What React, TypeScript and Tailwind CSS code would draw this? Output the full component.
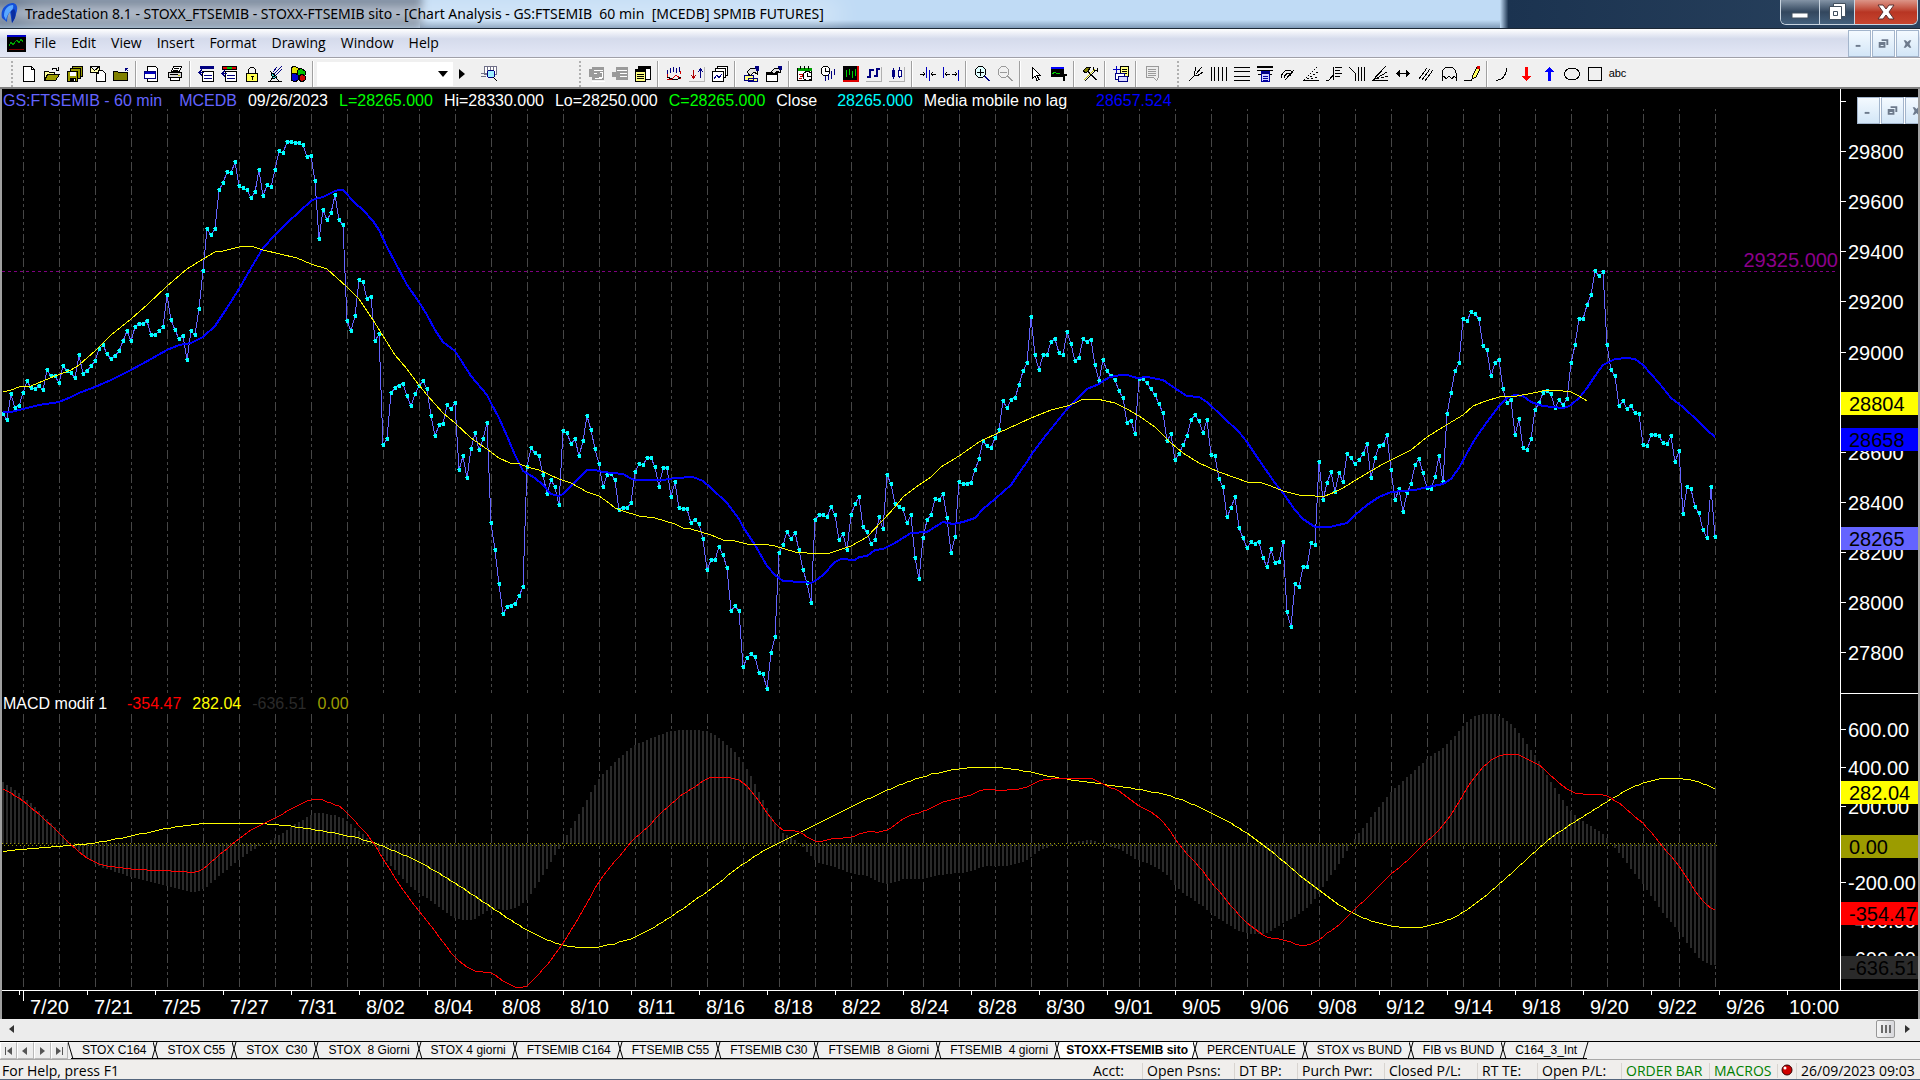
import { useState } from 'react'

type Point = [number, number]
type Shape = [d: string, fill: string, stroke?: string]

const FIRST_BAR_X = 3
const BAR_STEP = 4
const ZERO_Y = 844

// 60 minute closes, one per bar, as chart y positions
const CLOSES = [
  414, 420, 394, 408, 406, 393, 381, 388, 389, 386, 390, 370, 376, 376, 383, 366, 371, 373, 378, 355,
  374, 371, 366, 361, 349, 345, 354, 359, 356, 351, 341, 331, 341, 327, 324, 324, 321, 335, 335, 331,
  327, 295, 320, 330, 339, 336, 360, 331, 335, 309, 271, 229, 235, 229, 190, 183, 172, 173, 162, 186,
  188, 190, 198, 192, 170, 196, 185, 187, 170, 151, 153, 142, 142, 143, 143, 145, 157, 156, 181, 239,
  210, 220, 213, 195, 220, 225, 321, 331, 316, 280, 282, 299, 297, 341, 334, 445, 439, 393, 388, 386,
  384, 396, 406, 394, 386, 381, 389, 416, 436, 425, 424, 405, 409, 403, 470, 456, 478, 449, 433, 450,
  439, 423, 523, 550, 584, 614, 607, 606, 604, 596, 587, 467, 448, 453, 456, 475, 494, 480, 487, 505,
  431, 433, 444, 439, 456, 441, 416, 430, 449, 464, 487, 475, 474, 480, 510, 508, 508, 503, 472, 464,
  465, 458, 458, 467, 487, 468, 468, 497, 482, 508, 509, 509, 523, 520, 524, 539, 570, 560, 560, 547,
  555, 568, 611, 606, 611, 667, 658, 654, 657, 673, 674, 689, 653, 637, 553, 545, 532, 539, 533, 550,
  570, 583, 603, 520, 515, 515, 517, 507, 515, 540, 534, 550, 515, 504, 497, 527, 532, 544, 540, 517,
  529, 475, 484, 504, 507, 509, 523, 515, 558, 579, 538, 520, 515, 499, 500, 494, 518, 553, 537, 482,
  484, 484, 483, 470, 459, 441, 446, 448, 438, 430, 401, 408, 400, 398, 385, 371, 363, 317, 355, 370,
  355, 355, 342, 339, 353, 355, 332, 344, 361, 358, 339, 342, 340, 365, 381, 360, 371, 376, 380, 391,
  398, 423, 421, 434, 379, 379, 383, 389, 395, 404, 413, 441, 434, 460, 454, 445, 436, 420, 415, 421,
  433, 420, 455, 456, 479, 487, 517, 508, 497, 528, 538, 548, 542, 544, 542, 558, 567, 549, 563, 562,
  542, 612, 627, 584, 587, 567, 567, 543, 545, 462, 500, 483, 472, 492, 473, 482, 454, 458, 464, 460,
  454, 444, 478, 458, 446, 445, 435, 470, 500, 489, 512, 493, 484, 465, 459, 473, 488, 489, 477, 456,
  482, 414, 393, 371, 363, 319, 321, 312, 314, 319, 346, 350, 376, 363, 360, 389, 403, 400, 435, 419,
  448, 450, 439, 410, 403, 393, 391, 394, 408, 400, 405, 399, 363, 345, 319, 319, 305, 295, 271, 276,
  272, 345, 370, 376, 406, 401, 409, 406, 413, 414, 445, 446, 435, 435, 436, 443, 444, 436, 462, 451,
  514, 487, 489, 507, 513, 530, 538, 487, 537,
]

const NO_LAG_MA =
  '3,412 11,412 23,409 39,405 59,402 71,397 79,393 95,387 111,380 131,370 151,359 167,350 179,345 191,343 203,337 215,326 227,308 239,289 251,268 263,248 275,235 287,223 299,212 311,201 315,199 323,197 335,191 339,190 343,190 355,203 363,210 373,221 379,230 387,247 395,262 407,285 419,302 427,315 435,330 443,342 455,351 471,376 487,395 491,403 499,418 507,436 515,455 523,471 535,478 543,485 551,494 559,496 563,494 575,482 587,470 595,470 603,472 623,474 630,478 635,480 655,480 663,480 675,478 693,477 703,481 711,488 727,503 739,519 743,527 755,545 767,566 775,575 783,581 803,582 811,583 815,581 823,575 835,562 841,559 855,560 859,557 867,556 875,550 883,549 895,543 911,533 927,532 935,527 943,522 953,524 963,522 975,518 983,509 995,499 1011,485 1019,473 1027,462 1031,455 1043,439 1059,419 1067,409 1073,403 1087,389 1099,384 1103,381 1110,377 1121,375 1127,375 1137,378 1147,377 1163,380 1179,391 1187,396 1199,397 1207,402 1223,417 1239,432 1247,442 1259,460 1275,483 1283,493 1295,510 1303,519 1315,527 1330,527 1347,523 1355,515 1367,505 1379,497 1391,492 1415,490 1423,488 1443,484 1451,479 1459,468 1467,453 1475,439 1487,422 1499,406 1507,398 1515,395 1523,396 1531,402 1543,406 1563,408 1567,407 1571,405 1579,398 1587,388 1595,376 1603,365 1615,359 1627,358 1635,359 1643,365 1659,383 1671,398 1683,407 1699,422 1707,430 1715,437'

const CENTERED_MA =
  '3,392 11,390 19,387 31,386 43,381 55,376 71,370 79,365 87,358 95,351 111,335 131,319 147,305 167,286 187,269 203,259 215,252 223,251 243,246 251,246 263,250 297,258 311,264 327,269 347,287 359,299 375,323 383,336 395,355 407,369 419,385 427,395 443,413 455,423 471,438 491,452 499,458 510,463 520,464 527,467 539,470 559,479 571,483 587,492 599,496 609,503 615,508 623,511 639,516 655,518 675,524 683,528 691,529 711,535 723,540 735,541 747,544 763,544 775,546 795,552 807,553 830,553 839,550 851,546 867,537 883,520 895,507 903,497 919,485 931,477 941,467 959,456 979,442 1000,432 1007,429 1031,418 1051,410 1067,406 1075,403 1083,399 1097,399 1115,403 1127,409 1139,416 1155,427 1171,443 1183,453 1199,463 1219,472 1247,482 1262,483 1271,486 1283,491 1299,495 1315,496 1325,496 1335,492 1343,488 1359,478 1371,471 1383,464 1411,450 1427,437 1443,427 1463,415 1473,406 1483,402 1499,397 1517,396 1533,393 1547,390 1563,391 1571,392 1579,396 1587,401'

const MACD_AVG =
  '3,851 23,849 59,846 73,845 95,843 131,836 163,829 192,824 204,823 261,823 286,825 311,829 347,835 375,843 383,846 420,862 455,883 491,907 527,931 547,940 563,946 580,948 592,948 612,945 640,936 671,917 707,892 743,864 762,851 780,842 815,825 851,807 887,790 923,776 946,771 966,767 1005,767 1031,772 1052,777 1067,779 1103,784 1139,789 1158,793 1175,797 1191,803 1211,813 1228,821 1247,833 1264,845 1280,858 1300,876 1320,891 1337,904 1355,915 1370,921 1391,927 1421,928 1435,925 1447,921 1464,913 1480,901 1499,884 1521,865 1535,851 1553,836 1571,824 1590,813 1607,801 1627,790 1643,782 1660,778 1682,777 1700,782 1715,789'

const MACD_LINE =
  '3,789 14,795 23,801 41,816 59,833 73,847 88,859 98,864 122,868 155,870 182,871 194,873 204,869 212,861 229,847 240,838 257,826 263,824 276,818 292,808 306,802 312,799 320,799 339,806 345,810 351,817 367,834 375,845 388,867 408,897 420,913 429,923 443,942 455,958 469,969 478,972 488,971 496,975 504,982 514,987 524,988 529,985 547,965 563,943 580,916 600,879 612,865 629,845 637,835 642,833 660,814 671,804 683,794 699,784 709,777 730,777 742,781 754,794 767,813 780,830 795,830 803,834 815,842 824,841 836,838 851,837 867,831 881,832 889,830 901,820 911,815 920,813 934,806 946,801 952,800 960,797 969,796 983,789 1003,790 1026,788 1036,782 1052,778 1091,778 1097,780 1103,785 1120,791 1130,800 1139,806 1148,810 1162,820 1171,832 1179,845 1191,858 1203,871 1211,882 1228,902 1238,914 1248,924 1264,936 1277,939 1285,940 1298,945 1309,945 1317,942 1327,933 1337,927 1355,909 1366,899 1391,874 1407,861 1421,847 1437,832 1447,821 1458,804 1464,792 1472,780 1482,768 1492,759 1504,754 1517,754 1525,758 1535,763 1541,766 1553,778 1566,788 1571,792 1584,794 1604,794 1611,798 1623,806 1633,815 1643,823 1651,832 1662,846 1678,864 1688,880 1700,898 1709,907 1715,910'

const parse = (s: string): Point[] => s.split(' ').map(p => p.split(',').map(Number) as Point)

function valueAt(points: Point[], x: number): number {
  const i = points.findIndex(p => p[0] >= x)
  if (i <= 0) return points[0][1]
  const [x0, y0] = points[i - 1]
  const [x1, y1] = points[i]
  return y0 + ((y1 - y0) * (x - x0)) / (x1 - x0)
}

const barX = (i: number) => FIRST_BAR_X + i * BAR_STEP

// one value per bar, averaged over `reach` bars on each side
function resample(points: Point[], reach: number): number[] {
  const raw = CLOSES.map((_, i) => valueAt(points, barX(i)))
  return raw.map((_, i) => {
    const r = Math.min(reach, i, raw.length - 1 - i)
    const part = raw.slice(i - r, i + r + 1)
    return part.reduce((a, b) => a + b, 0) / part.length
  })
}

const toPolyline = (ys: number[]) => ys.map((y, i) => `${barX(i)},${Math.round(y)}`).join(' ')

const closeDots = CLOSES.map((y, i) => `M${barX(i) - 1} ${y - 2}h3v4h-3zM${barX(i) - 2} ${y - 1}h1v1h-1z`).join('')

const macdLine = resample(parse(MACD_LINE), 1)
const macdAvg = resample(parse(MACD_AVG), 4)
const histogram = macdLine.map((y, i) => `M${barX(i) - 1} ${ZERO_Y}h2v${Math.round(y - macdAvg[i])}h-2z`).join('')

const gridX = Array.from({ length: 48 }, (_, i) => 23 + i * 36)

const DATES = [
  '7/20', '7/21', '7/25', '7/27', '7/31', '8/02', '8/04', '8/08', '8/10', '8/11', '8/16', '8/18', '8/22', '8/24',
  '8/28', '8/30', '9/01', '9/05', '9/06', '9/08', '9/12', '9/14', '9/18', '9/20', '9/22', '9/26', '10:00',
]

const AXIS_LABELS: [string, number][] = [
  ['29800', 151], ['29600', 201], ['29400', 251], ['29200', 301], ['29000', 352], ['28600', 452],
  ['28400', 502], ['28200', 552], ['28000', 602], ['27800', 652], ['600.00', 729], ['400.00', 767],
  ['200.00', 806], ['-200.00', 882], ['-400.00', 920], ['-600.00', 958],
]

const AXIS_TAGS: [string, number, string][] = [
  ['28804', 392, '#ffff00'], ['28658', 428, '#0000ff'], ['28265', 527, '#6464ff'], ['282.04', 781, '#ffff00'],
  ['0.00', 835, '#9c9c00'], ['-354.47', 902, '#ff0000'], ['-636.51', 956, '#2a2a2a'],
]

const MENUS = ['File', 'Edit', 'View', 'Insert', 'Format', 'Drawing', 'Window', 'Help']

const TABS = [
  'STOX C164', 'STOX C55', 'STOX  C30', 'STOX  8 Giorni', 'STOX 4 giorni', 'FTSEMIB C164', 'FTSEMIB C55',
  'FTSEMIB C30', 'FTSEMIB  8 Giorni', 'FTSEMIB  4 giorni', 'STOXX-FTSEMIB sito', 'PERCENTUALE', 'STOX vs BUND',
  'FIB vs BUND', 'C164_3_Int',
]

const K = '#000'
const N = '#000080'
const G = '#9a9a9a'

// 16x16 pixel toolbar glyphs
const ICONS: Record<string, Shape[]> = {
  New: [['M2.5 .5h8l3 3v12h-11z', '#fff', K], ['M10.500 .5v3h3', 'none', K]],
  Open: [['M.5 14.500v-9h4l1 1h5v2', '#ffff9c', K], ['M.5 14.500l3-6h12l-4 6z', '#9c9c00', K], ['M8 3.500q3-3 5 0M14.500 1v3h-3', 'none', K]],
  'Save All': [['M5.500 .5h10v10h-10z', '#9c9c00', K], ['M3.500 2.500h10v10h-10z', '#9c9c00', K], ['M.5 5.500h10v10h-10z', '#9c9c00', K], ['M3 6h6v4h-6z', '#fff'], ['M3 12h6v4h-6z', K], ['M7 13h1v2h-1z', '#fff']],
  'Send Workspace': [['M.5 .5h9v6h-9zM.5 .5l4 4 5-4', '#ffffb0', K], ['M6.500 15.500v-8h2v-3h4l3 3v8z', '#fff', K]],
  Close: [['M.5 14.500v-9h4l1 1h9v8z', '#808000', K], ['M15 5l-3-3M12 5V2h3', 'none', N]],
  'Print Preview': [['M3.500 .5h8l2 2v13h-10z', '#fff', K], ['M.5 5.500h11v7h-11z', '#fff', N], ['M1 6h10v2h-10z', '#0000c0']],
  Print: [['M4.500 5.500l2-5h8l-2 5z', '#fff', K], ['M1.500 6.500h13v5h-13z', '#d8d8d8', K], ['M3.500 11.500h9v3h-9z', '#fff', K], ['M7 2h5M6 4h5M3 8h8', 'none', K], ['M11 9h2v1h-2z', '#c0c000']],
  'Insert Row': [['M2 0h14v3h-14z', N], ['M4.500 5.500h11v10h-11z', '#fff', K], ['M0 6.500h6M1 6.500l3-3M1 6.500l3 3M6 9.500h8M6 12.500h8', 'none', N]],
  'Insert Bar': [['M1 0h15v4h-15z', K], ['M2 1h4v2h-4zM11 1h4v2h-4z', '#e00000'], ['M6 1h5v2h-5z', '#00c000'], ['M4.500 5.500h11v10h-11z', '#fff', K], ['M0 7.500h6M1 7.500l3-3M1 7.500l3 3M6 9.500h8M6 12.500h8', 'none', N]],
  Lock: [['M4.500 8V3.500q3.500-5 7 0V8', 'none', K], ['M2.500 7.500h11v8h-11z', '#ffff50', K], ['M7 10h3v1h-1v3h-1v-3h-1z', K]],
  Satellite: [['M7 8l8-8M9 9l6-6M6 6l4-5', 'none', N], ['M4 6l6 5-4 2z', '#40e0e0', K], ['M1 15h14M3 15l4-5 5 5', 'none', K]],
  Objects: [['M1 2l3-2 4 2v5h-6z', '#e0e000', K], ['M7 5l4-3 4 3v4l-4 2-4-2z', '#00c000', K], ['M1 8l4-1 3 2v5l-3 2-4-2z', '#0000d0', K], ['M9 10l3-2 3 2v4l-3 2-3-2z', '#d00000', K]],
  Find: [['M3.500 .5h12v8h-12z', '#fff', '#707088'], ['M6.500 1v6M9.500 1v6M12.500 1v6', 'none', '#707088'], ['M0 7.500h6M0 10.500h5', 'none', '#707088'], ['M6 8a4 4 0 1 1 8 0a4 4 0 1 1-8 0', '#a0f0ff', N], ['M12 11l4 4', 'none', K]],
  'Order Ticket': [['M3 1h12v13h-12z', G], ['M0 3h7v8h-7z', G], ['M5 4h9M5 7h3M11 6h2v5h-3M6 12h7', 'none', '#fff'], ['M3 15.500h13V2', 'none', '#fff']],
  'Order Table': [['M4 1h12v13h-12z', G], ['M0 6h7v5h-7z', G], ['M5 4.500h10M8 7.500h7M8 10.500h7', 'none', '#fff']],
  'Chart Windows': [['M3.500 .5h12v13h-12z', '#fff', K], ['M3 0h13v3h-13z', K], ['M.5 3.500h10v12h-10z', '#ffff80', K], ['M0 3h11v3h-11z', K], ['M2 8.500h7M2 10.500h7M2 12.500h7', 'none', K]],
  'Insert Indicator': [['M1.500 4v5M4.500 2v5M7.500 1v5M10.500 2v5M13.500 1v5', 'none', N], ['M1 8v3M14 5v3', 'none', '#d00000'], ['M1 14l5-1 4-4 5 4', 'none', '#d00000'], ['M1 11l5 2 5 1 4-3', 'none', K]],
  'Insert Strategy': [['M4.500 4v8M2 9l2.500 3L7 9', 'none', '#b00000'], ['M11.500 12V3M9 6l2.500-3L14 6', 'none', N], ['M0 15.500h15.500V1', 'none', '#b8b8b8']],
  'Chart Pages': [['M5.500 .5h10v9h-10z', '#fff', K], ['M3.500 2.500h10v9h-10z', '#fff', K], ['M.5 5.500h11v10h-11z', '#fff', K], ['M2 13l3-4 2 3 3-4', 'none', N]],
  'Format Window': [['M1 9h9v5h-9zM5 12h9v3h-9z', '#ffff80', N], ['M4 6l4-4h6v6l-3-2-4 4z', '#e0e0e0', K], ['M12 0h4v5h-3z', N]],
  'Format Symbol': [['M.5 6.500h11v9h-11z', '#fff', K], ['M1 7h10v2h-10z', K], ['M5 6l4-4h6l-1 5-3-2-3 3z', '#e0e0e0', K], ['M12 0h4v4h-3z', N]],
  'Time Frame': [['M.5 2.500h14v12h-14z', '#fff', K], ['M1 2h14v3h-14z', '#00a000'], ['M3 0v3M7 0v3M11 0v3', 'none', K], ['M2 8h3v2h-2M2 12h3', 'none', '#c00000'], ['M6 10a4.500 4.500 0 1 1 9 0a4.500 4.500 0 1 1-9 0', '#fff', K], ['M10.500 7v3h3', 'none', K]],
  'Data Clock': [['M1 5a4.500 4.500 0 1 1 9 0a4.500 4.500 0 1 1-9 0', '#fff', K], ['M5.500 2v3h3', 'none', K], ['M5.500 10v5M8.500 8v6M11.500 5v8M14.500 3v6', 'none', N]],
  'Bar Chart': [['M0 0h16v16h-16z', '#e00000'], ['M0 0h14v14h-14z', K], ['M3.500 4v7M6.500 3v6M9.500 5v7M12 3v7', 'none', '#00d000']],
  'OHLC Bars': [['M3 3h2v9h-2zM1 10h2v2h-2zM5 3h3v2h-3zM10 2h2v9h-2zM8 9h2v2h-2zM12 2h2v2h-2z', N], ['M0 15.500h15.500V1', 'none', '#b0b0b0']],
  Candlesticks: [['M4.500 2v11M10.500 1v11', 'none', N], ['M3 4h3v7h-3z', N], ['M9 4h3v6h-3z', '#fff', N], ['M0 15.500h15.500V1', 'none', '#b0b0b0']],
  'Increase Spacing': [['M6.500 1v11M9.500 4v11', 'none', '#0000c0'], ['M0 8h5M3 6l2 2-2 2M16 8h-5M13 6l-2 2 2 2', 'none', K]],
  'Decrease Spacing': [['M.5 1v11M15.500 4v11', 'none', '#0000c0'], ['M2 8h5M4 6L2 8l2 2M14 8H9M12 6l2 2-2 2', 'none', K]],
  'Zoom In': [['M1 6a5.500 5.500 0 1 1 11 0a5.500 5.500 0 1 1-11 0', '#e0ffff', K], ['M6 3h1v7h-1zM3 6h7v1h-7z', K], ['M10 10l5 5M11 10l5 5', 'none', N]],
  'Zoom Out': [['M1 6a5.500 5.500 0 1 1 11 0a5.500 5.500 0 1 1-11 0', 'none', G], ['M3 6.500h7M10 10l5 5M11 10l5 5', 'none', G]],
  Pointer: [['M4.500 1.500v11l2.500-2.500 2 4.500 2-1-2-4h3.500z', '#fff', K]],
  'Data Tip': [['M0 1h13v10h-13z', K], ['M0 1h13v2h-13z', '#0000ff'], ['M1 8l3-2 2 2 3-1', 'none', '#00d000'], ['M9 8h7v2h-2v5h-2v-5h-3z', K]],
  Tools: [['M3 3l11 11M4 3l11 11', 'none', K], ['M13 3L2 14', 'none', '#c0c000'], ['M14 4L3 15', 'none', K], ['M1 5l4-4h4L6 5 4 7z', '#808000', K], ['M11 1l1 3 3 1v-3', 'none', K]],
  'Add Window': [['M3 0h1v7h-1zM0 3h7v1h-7z', '#0000c0'], ['M7.500 .5h8v10h-8z', '#ffff80', K], ['M9 3h5M9 5h5M9 7h5', 'none', K], ['M2.500 7.500h9v6h-9z', '#fff', N], ['M5.500 10.500h9v5h-9z', '#d8d8ff', N]],
  Comment: [['M2.500 .5h12v11l-2 3-3-3h-7z', '#ececec', G], ['M4 3h8M4 5h8M4 7h8M4 9h8', 'none', G]],
  Pitchfork: [['M1 15L7 9M8 1L6 9l3 1 6-4M8 8l6-7', 'none', K]],
  'Vertical Lines': [['M.5 1v14M3.500 1v14M7.500 1v14M11.500 1v14M15.500 1v14', 'none', K]],
  'Horizontal Lines': [['M0 1.500h16M0 5.500h16M0 10.500h16M0 14.500h16', 'none', K]],
  Calculator: [['M0 0h16v2h-16zM0 4h16v1h-16z', K], ['M1 8h14', 'none', K], ['M4.500 5.500h8v10h-8z', '#d0d0ff', '#0000a0'], ['M5 6h7v2h-7z', N], ['M6 10h5M6 12h5M6 14h5', 'none', '#0000a0']],
  'Speed Arc': [['M1 12q1-7 7-8q3 0 5 3M4 12q1-5 6-5M7 12q0-3 4-3M5 14L14 4', 'none', K]],
  'Fan Dotted': [['M0 14.500h16', 'none', K], ['M1 13h1v1h-1zM3 11h1v1h-1zM5 9h1v1h-1zM7 7h1v1h-1zM9 5h1v1h-1zM11 3h1v1h-1zM13 1h1v1h-1zM4 12h2v1h-2zM7 10h2v1h-2zM10 8h2v1h-2zM13 6h2v1h-2zM8 12h2v1h-2zM12 11h2v1h-2z', K]],
  'Fibonacci Retracement': [['M0 14h3l5-6M7.500 1v13', 'none', K], ['M9 1.500h7M9 4.500h5M9 7.500h7M9 10.500h5', 'none', K]],
  'Fibonacci Extension': [['M0 1l6 6v8M9.500 1v14M12.500 1v14M15.500 1v14', 'none', K]],
  'Gann Fan': [['M0 15L14 0M0 15l15-9M0 14.500h16', 'none', K], ['M4 12h3v1h-3zM9 11h3v1h-3zM13 10h3v1h-3z', K]],
  'Horizontal Extent': [['M1 7.500h14', 'none', K], ['M1 7h1v-1h1v-1h1v-1h1v7h-1v-1h-1v-1h-1v-1h-1zM15 7h-1v-1h-1v-1h-1v-1h-1v7h1v-1h1v-1h1v-1h1z', K]],
  Parallel: [['M1 13L9 2M4 14L12 3M7 15L15 4', 'none', K]],
  Cycle: [['M1 15V7q1-6 7-6t7 6v8M1 12l2-2 2 3 3-3 3 3 2-3 2 2', 'none', K]],
  Pencil: [['M0 14.500h8', 'none', K], ['M8 13l1-4 4-8 3 2-4 8z', '#ffff60', K], ['M13 0h3v3h-3z', '#e00000']],
  Arc: [['M1 14q9 1 11-12', 'none', K]],
  'Arrow Down': [['M7 1h3v9h3l-4 5h-1l-4-5h3z', '#ff0000']],
  'Arrow Up': [['M7 15h3V6h3L9 1H8L4 6h3z', '#0000ff']],
  Ellipse: [['M.5 8a7.500 6 0 1 1 15 0a7.500 6 0 1 1-15 0', 'none', K]],
  Rectangle: [['M1.500 1.500h13v13h-13z', 'none', K]],
}

const ToolIcon = ({ name }: { name: string }) => (
  <svg width="16" height="16" viewBox="0 0 16 16" shapeRendering="crispEdges">
    {ICONS[name].map(([d, fill, stroke], i) => (
      <path key={i} d={d} fill={fill} stroke={stroke} />
    ))}
  </svg>
)

const ToolButton = ({ name }: { name: string }) => (
  <button aria-label={name} className="flex h-6 w-[23px] shrink-0 items-center justify-center hover:bg-white">
    <ToolIcon name={name} />
  </button>
)

const Separator = () => <span className="mx-[3px] h-[26px] w-[2px] shrink-0 border-l border-[#a0a0a0] bg-white" />

const Grip = () => <span className="h-[26px] w-[3px] shrink-0 border-l-2 border-dotted border-[#b0b0b0]" />

// "|" in the list stands for a separator
const ToolGroup = ({ items }: { items: string[] }) => (
  <>
    {items.map((name, i) => (name === '|' ? <Separator key={i} /> : <ToolButton key={name} name={name} />))}
  </>
)

const MdiControls = () => (
  <div className="flex gap-px bg-white">
    {[
      ['Minimize window', 'M7 14h5v2H7z'],
      ['Restore window', 'M9 8h7v6h-2v-4H9zM6 11h7v6H6zM8 14v1h3v-1z'],
      ['Close window', 'M7 9h2l2 2 2-2h2l-2 4 2 4h-2l-2-2-2 2H7l2-4z'],
    ].map(([label, d]) => (
      <button
        key={label}
        aria-label={label}
        className="flex h-[27px] w-[23px] shrink-0 items-center justify-center border border-[#a3b5cc] bg-linear-to-b from-[#f4faff] to-[#d3e6f7]"
      >
        <svg width="22" height="25" viewBox="0 0 22 25" fill="#6d7a8c" fillRule="evenodd">
          <path d={d} />
        </svg>
      </button>
    ))}
  </div>
)

const TitleBar = () => (
  <header className="relative flex h-[29px] shrink-0 items-start overflow-hidden border-b border-[#1c2836] bg-[#c0dbf5]">
    <span className="absolute bottom-0 left-[420px] right-[420px] h-2 bg-linear-to-b from-transparent to-[#7f9ab8]" />
    <span className="absolute -top-1 bottom-0 -left-2 w-[430px] bg-linear-to-b from-[#44546a] via-[#a4b2c4] to-[#5c6b80] blur-xs" />
    <span className="absolute inset-y-0 right-0 w-[420px] bg-linear-to-r from-transparent via-[#1b3350] via-2% to-[#2a435f]" />
    <span className="absolute left-5 top-1 h-5 w-[820px] rounded-full bg-white/40 blur-md" />
    <svg width="18" height="26" viewBox="0 0 18 26" className="relative ml-px mt-px shrink-0">
      <path d="M1 17C-1 9 4 3 11 2c6 0 6 6 4 11-1 4-2 6-4 9l-2-11c-2 2-3 5-3 10z" fill="#1450d8" />
      <path d="M3 15C3 8 7 4 12 4c1 3-1 5-3 7-2 2-3 4-4 8z" fill="#5aa8ff" />
      <path d="M10 10l1 12 3-5c1-4 1-7-1-9z" fill="#0a2ea0" />
    </svg>
    <h1 className="relative ml-[6px] flex h-7 items-center whitespace-pre font-['Noto_Sans',sans-serif] text-sm text-black">
      TradeStation 8.1 - STOXX_FTSEMIB - STOXX-FTSEMIB sito - [Chart Analysis - GS:FTSEMIB  60 min  [MCEDB] SPMIB FUTURES]
    </h1>
    <div className="relative ml-auto mr-[2px] flex h-[25px] overflow-hidden rounded-b-md border border-t-0 border-[#c8d4e0]">
      <button aria-label="Minimize" className="flex w-[39px] items-center justify-center border-r border-[#c8d4e0] bg-linear-to-b from-[#8494a6] via-[#33475e] via-50% to-[#44607c]">
        <svg width="18" height="18"><path d="M1 10h16v5H1z" fill="#fff" stroke="#43505e" /></svg>
      </button>
      <button aria-label="Restore" className="flex w-[35px] items-center justify-center border-r border-[#c8d4e0] bg-linear-to-b from-[#8494a6] via-[#33475e] via-50% to-[#44607c]">
        <svg width="20" height="20" fill="#fff" stroke="#43505e" fillRule="evenodd">
          <path d="M6.500 1.500h12v13h-12z" />
          <path d="M2.500 4.500h12v13h-12zM6.500 9.500v4h4v-4z" />
        </svg>
      </button>
      <button aria-label="Close" className="flex w-[62px] items-center justify-center bg-linear-to-b from-[#dc9588] via-[#b83523] via-50% to-[#c8452f]">
        <svg width="20" height="18"><path d="M2 2h5l3 4 3-4h5l-5 7 5 7h-5l-3-4-3 4H2l5-7z" fill="#fff" stroke="#5a3030" /></svg>
      </button>
    </div>
  </header>
)

const MenuBar = () => (
  <nav className="flex h-[29px] shrink-0 items-center border-b border-[#a0a0a8] bg-linear-to-b from-white via-[#d5dbec] via-35% to-[#e4e8f6]">
    <svg width="19" height="17" className="ml-[7px] shrink-0" shapeRendering="crispEdges">
      <path d="M0 0h19v17H0z" fill="#000" />
      <path d="M0 0h19v2H0z" fill="#0000c8" />
      <path d="M2 11l2-4 2 3 2-3 2-2 2 3 2-4 2 3" fill="none" stroke="#00a000" />
      <path d="M2 14.500h15" stroke="#800000" />
    </svg>
    <ul className="ml-[8px] flex flex-1 gap-[15px] text-sm text-black">
      {MENUS.map(m => (
        <li key={m}>
          <button>{m}</button>
        </li>
      ))}
    </ul>
    <div className="mr-px">
      <MdiControls />
    </div>
  </nav>
)

const Toolbar = () => (
  <div className="flex h-[31px] shrink-0 items-center overflow-hidden border-b-2 border-t border-b-[#808080] border-t-white bg-[#f0f0f0] pl-[11px] pt-px">
    <Grip />
    <span className="w-[3px] shrink-0" />
    <ToolGroup items={['New', 'Open', 'Save All', 'Send Workspace', 'Close', '|', 'Print Preview', 'Print', '|', 'Insert Row', 'Insert Bar', 'Lock', 'Satellite', 'Objects', '|']} />
    <select aria-label="Symbol" className="h-6 w-[136px] shrink-0 appearance-none bg-white" />
    <svg width="10" height="6" className="pointer-events-none -ml-[15px] mr-[5px] shrink-0"><path d="M0 0h10L5 6z" /></svg>
    <button aria-label="Go" className="flex h-6 w-[18px] shrink-0 items-center justify-center">
      <svg width="6" height="10"><path d="M0 0l6 5-6 5z" /></svg>
    </button>
    <span className="w-[6px] shrink-0" />
    <ToolButton name="Find" />
    <span className="w-[79px] shrink-0" />
    <Grip />
    <span className="w-[3px] shrink-0" />
    <ToolGroup
      items={[
        'Order Ticket', 'Order Table', 'Chart Windows', '|', 'Insert Indicator', 'Insert Strategy', 'Chart Pages', '|',
        'Format Window', 'Format Symbol', '|', 'Time Frame', 'Data Clock', 'Bar Chart', 'OHLC Bars', 'Candlesticks', '|',
        'Increase Spacing', 'Decrease Spacing', '|', 'Zoom In', 'Zoom Out', '|', 'Pointer', 'Data Tip', '|', 'Tools', '|',
        'Add Window', '|', 'Comment',
      ]}
    />
    <span className="w-[14px] shrink-0" />
    <Grip />
    <span className="w-[4px] shrink-0" />
    <ToolGroup
      items={[
        'Pitchfork', 'Vertical Lines', 'Horizontal Lines', 'Calculator', 'Speed Arc', 'Fan Dotted', 'Fibonacci Retracement',
        'Fibonacci Extension', 'Gann Fan', 'Horizontal Extent', 'Parallel', 'Cycle', 'Pencil', '|', 'Arc', 'Arrow Down',
        'Arrow Up', 'Ellipse', 'Rectangle',
      ]}
    />
    <button className="h-6 w-[23px] shrink-0 text-center font-['Liberation_Sans',sans-serif] text-[11px] text-black">abc</button>
  </div>
)

const Grid = ({ from, to, offset }: { from: number; to: number; offset: number }) => (
  <g stroke="#464646" strokeDasharray="9 3 3 3 3 3" strokeDashoffset={offset}>
    {gridX.map(x => (
      <line key={x} x1={x + 0.5} x2={x + 0.5} y1={from} y2={to} />
    ))}
  </g>
)

const PriceChart = () => (
  <svg className="block h-[585px] w-full" shapeRendering="crispEdges">
    <g transform="translate(-2 -109)" fill="none">
      <Grid from={109} to={693} offset={19} />
      <line x1="2" x2="1836" y1="271.500" y2="271.500" stroke="#800080" strokeDasharray="3 3" />
      <text x="1838" y="267" textAnchor="end" fill="#8c008c" className="text-xl">29325.000</text>
      <polyline points={toPolyline(CLOSES)} stroke="#6464ff" />
      <path d={closeDots} fill="#00ffff" />
      <polyline points={NO_LAG_MA} stroke="#0000ff" strokeWidth="2" />
      <polyline points={CENTERED_MA} stroke="#ffff00" />
    </g>
  </svg>
)

const MacdChart = () => (
  <svg className="block h-[276px] w-full" shapeRendering="crispEdges">
    <g transform="translate(-2 -714)" fill="none">
      <Grid from={714} to={987} offset={0} />
      <path d={histogram} fill="#2a2a2a" />
      <path d="M2 843.500h1715" stroke="#9c9c00" strokeDasharray="1 3" />
      <path d="M4 845.500h1713" stroke="#9c9c00" strokeDasharray="1 3" />
      <polyline points={toPolyline(macdAvg)} stroke="#ffff00" />
      <polyline points={toPolyline(macdLine)} stroke="#ff0000" />
    </g>
  </svg>
)

const ValueAxis = () => (
  <svg className="block h-[901px] w-[78px] shrink-0 text-xl" fill="#fff">
    <g transform="translate(-1840 -89)">
      <path d="M1840.500 89v902M1840 693.500h78M1840 101.500h6" stroke="#fff" />
      {AXIS_LABELS.map(([label, y]) => (
        <g key={label}>
          <path d={`M1840 ${y + 0.5}h6`} stroke="#fff" />
          <text x="1848" y={y + 8}>{label}</text>
        </g>
      ))}
      {AXIS_TAGS.map(([label, y, color]) => (
        <g key={label}>
          <rect x="1841" y={y} width="77" height="23" fill={color} />
          <text x="1849" y={y + 19} fill="#000">{label}</text>
        </g>
      ))}
    </g>
  </svg>
)

const DateAxis = () => (
  <svg className="block h-[29px] w-full text-xl" fill="#fff">
    <g transform="translate(-2 -990)">
      <path d="M2 990.500h1916M23.500 990v11" stroke="#fff" />
      {DATES.map((d, i) => {
        const x = 19 + i * 68
        const shift = i === 0 ? 11 : d === '10:00' ? 2 : 7
        return (
          <g key={d}>
            <path d={`M${x + 0.5} 990v5`} stroke="#fff" />
            <text x={x + shift} y="1014">{d}</text>
          </g>
        )
      })}
    </g>
  </svg>
)

const ChartWindow = () => (
  <main className="relative shrink-0 border-x-2 border-[#a0a0a0] bg-black font-['Liberation_Sans',sans-serif]">
    <div className="flex">
      <div className="min-w-0 flex-1 overflow-hidden">
        <div className="flex h-5 items-center gap-[11px] whitespace-pre pl-px pt-1 text-base text-white">
          <span className="text-[#6464ff]">GS:FTSEMIB - 60 min</span>
          <span className="pl-[6px] text-[#6464ff]">MCEDB</span>
          <span>09/26/2023</span>
          <span className="text-[#00ff00]">L=28265.000</span>
          <span>Hi=28330.000</span>
          <span>Lo=28250.000</span>
          <span className="text-[#00ff00]">C=28265.000</span>
          <span>Close</span>
          <span className="pl-[9px] text-[#00ffff]">28265.000</span>
          <span>Media mobile no lag</span>
          <span className="pl-[18px] text-[#0000ff]">28657.524</span>
        </div>
        <PriceChart />
        <div className="flex h-5 items-center gap-[11px] pl-px text-base text-white">
          <span>MACD modif 1</span>
          <span className="pl-[9px] text-[#ff0000]">-354.47</span>
          <span className="text-[#ffff00]">282.04</span>
          <span className="text-[#2a2a2a]">-636.51</span>
          <span className="text-[#9c9c00]">0.00</span>
        </div>
        <MacdChart />
      </div>
      <ValueAxis />
    </div>
    <DateAxis />
    <div className="absolute right-0 top-2 w-[61px] overflow-hidden">
      <MdiControls />
    </div>
  </main>
)

const ScrollBar = () => (
  <div className="flex h-[22px] shrink-0 items-center bg-[#ececec] pb-[3px] pl-[9px] pr-[10px]">
    <button aria-label="Scroll left">
      <svg width="5" height="8"><path d="M5 0v8L0 4z" fill="#333" /></svg>
    </button>
    <button aria-label="Scroll thumb" className="ml-auto mr-[10px] flex h-[18px] w-[19px] items-center justify-center gap-[2px] rounded-xs border border-[#979797] bg-linear-to-r from-[#f5f5f5] to-[#d8d8dc]">
      <span className="h-2 w-[2px] bg-[#6a6a6a]" />
      <span className="h-2 w-[2px] bg-[#6a6a6a]" />
      <span className="h-2 w-[2px] bg-[#6a6a6a]" />
    </button>
    <button aria-label="Scroll right">
      <svg width="5" height="8"><path d="M0 0v8l5-4z" fill="#333" /></svg>
    </button>
  </div>
)

const NAV = [
  ['First tab', 'M4 3h1v8H4zM11 3v8L6 7z'],
  ['Previous tab', 'M9 3v8L4 7z'],
  ['Next tab', 'M5 3v8l5-4z'],
  ['Last tab', 'M4 3v8l5-4zM10 3h1v8h-1z'],
]

function WorkspaceTabs() {
  const [active, setActive] = useState('STOXX-FTSEMIB sito')
  return (
    <div className="flex h-[18px] shrink-0 border-t border-black bg-[#f0f0f0] font-['Liberation_Sans',sans-serif] text-xs text-black">
      {NAV.map(([label, d]) => (
        <button key={label} aria-label={label} className="flex h-[17px] w-[17px] shrink-0 items-center justify-center border border-[#b8b8b8] border-l-white border-t-white bg-[#ececec]">
          <svg width="15" height="14" fill="#555"><path d={d} /></svg>
        </button>
      ))}
      <div role="tablist" className="ml-[3px] flex">
        {TABS.map(t => (
          <button
            key={t}
            role="tab"
            aria-selected={t === active}
            onClick={() => setActive(t)}
            className={`relative h-[17px] whitespace-pre border-b border-black ${t === active ? 'bg-white px-2 font-bold' : 'bg-[#f0f0f0] pl-[11px] pr-[10px]'}`}
          >
            {t}
            <svg width="7" height="17" className="absolute -right-[2px] top-0 z-10">
              <path d="M6 0L1 17" stroke="#000" fill="none" />
            </svg>
            <svg width="7" height="17" className="absolute -left-[3px] top-0">
              <path d="M0 0l5 17" stroke="#000" fill="none" />
            </svg>
          </button>
        ))}
      </div>
    </div>
  )
}

const StatusBar = () => (
  <footer className="flex h-5 shrink-0 items-center whitespace-nowrap border-t border-[#a8a8a8] bg-[#f0eeec] pt-[2px] text-sm leading-4 text-black">
    <span className="pl-[2px]">For Help, press F1</span>
    <span className="ml-auto w-[49px]">Acct:</span>
    <span className="w-[92px] border-l border-[#d8d4d0] pl-1">Open Psns:</span>
    <span className="w-[63px] border-l border-[#d8d4d0] pl-1">DT BP:</span>
    <span className="w-[87px] border-l border-[#d8d4d0] pl-1">Purch Pwr:</span>
    <span className="w-[93px] border-l border-[#d8d4d0] pl-1">Closed P/L:</span>
    <span className="w-[60px] border-l border-[#d8d4d0] pl-1">RT TE:</span>
    <span className="w-[84px] border-l border-[#d8d4d0] pl-1">Open P/L:</span>
    <a href="#order-bar" className="w-[88px] border-l border-[#d8d4d0] pl-1 text-[#008000]">ORDER BAR</a>
    <a href="#macros" className="w-[68px] border-l border-[#d8d4d0] pl-1 text-[#008000]">MACROS</a>
    <span className="flex w-[19px] justify-center border-l border-[#d8d4d0]">
      <svg width="12" height="14">
        <circle cx="6" cy="6" r="5" fill="#d00000" stroke="#300" />
        <circle cx="4" cy="4" r="1.500" fill="#fff" />
      </svg>
    </span>
    <span className="w-[124px] border-l border-[#d8d4d0] pl-1">26/09/2023 09:03</span>
  </footer>
)

export default function App() {
  return (
    <div className="flex min-h-screen flex-col overflow-hidden bg-[#c4d0e4] font-['Open_Sans','Noto_Sans',sans-serif]">
      <TitleBar />
      <MenuBar />
      <Toolbar />
      <ChartWindow />
      <ScrollBar />
      <WorkspaceTabs />
      <StatusBar />
      <div className="h-px bg-[#54657c]" />
    </div>
  )
}
